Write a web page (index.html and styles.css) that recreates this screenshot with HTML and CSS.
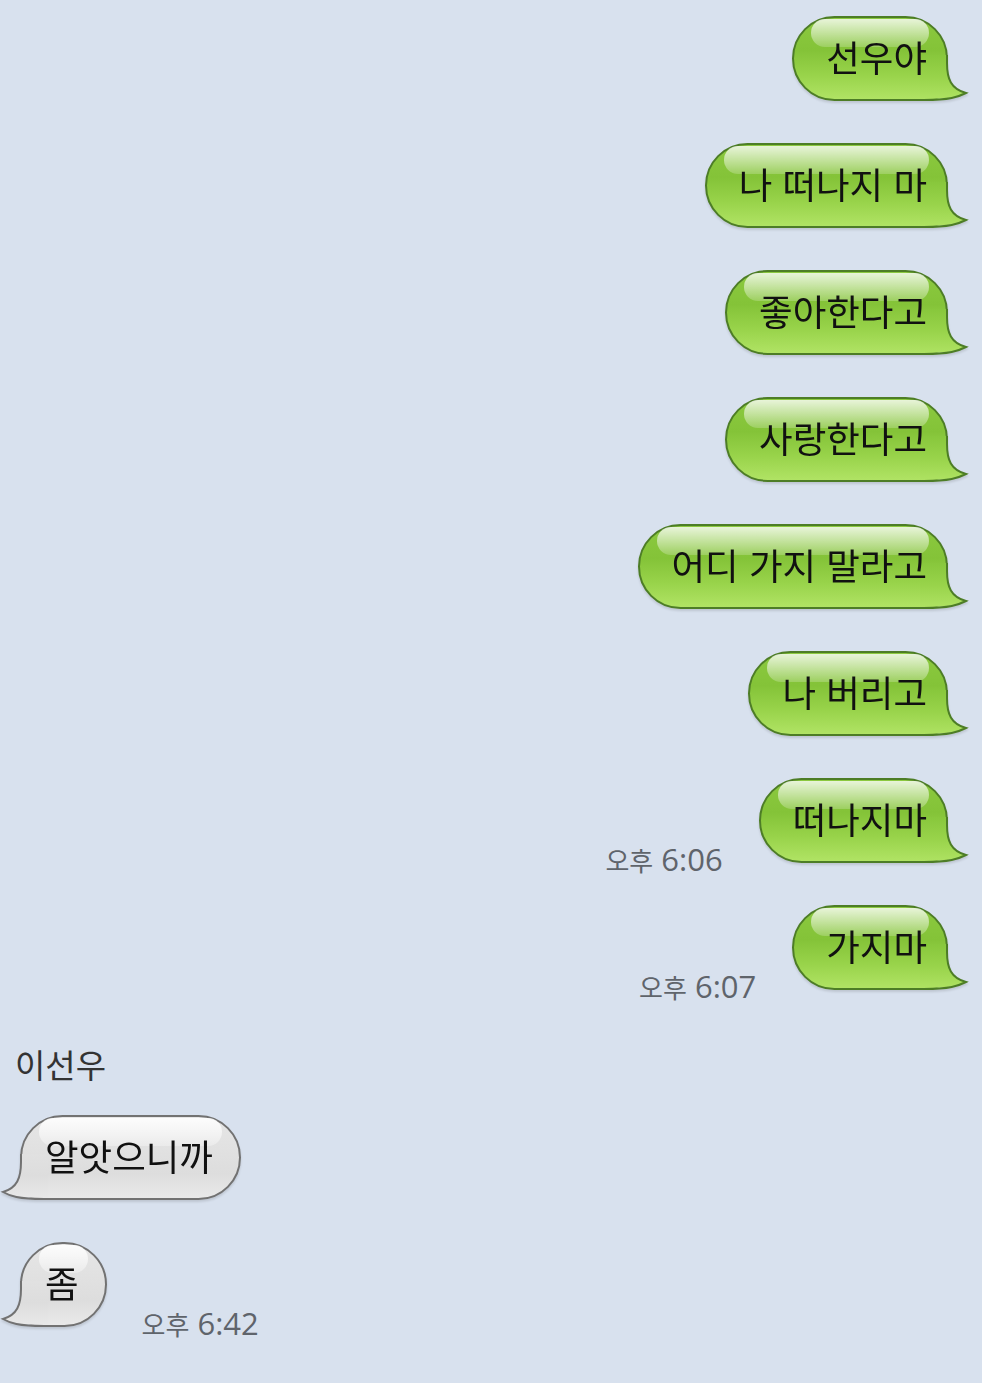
FILE: index.html
```html
<!DOCTYPE html>
<html lang="ko">
<head>
  <meta charset="UTF-8">
  <meta name="viewport" content="width=device-width, initial-scale=1.0">
  <title>이선우</title>
  <link rel="stylesheet" href="styles.css">
</head>
<body>
<svg class="sprite" width="0" height="0" aria-hidden="true">
  <defs>
    <linearGradient id="grad-green" x1="0" y1="0" x2="0" y2="46" gradientUnits="userSpaceOnUse">
      <stop offset="0" stop-color="#88c73c"/>
      <stop offset="0.47" stop-color="#98d34a"/>
      <stop offset="1" stop-color="#b0e364"/>
    </linearGradient>
    <linearGradient id="grad-gray" x1="0" y1="0" x2="0" y2="46" gradientUnits="userSpaceOnUse">
      <stop offset="0" stop-color="#e1e1e1"/>
      <stop offset="0.47" stop-color="#dddddd"/>
      <stop offset="1" stop-color="#e9e9e9"/>
    </linearGradient>
  </defs>
  <!-- bubble tail, drawn for a right-side bubble; left side is mirrored in css -->
  <symbol id="tail-green" viewBox="0 0 50 46">
    <path fill="url(#grad-green)" d="M0,0 L27,0 L27,8 C27,24 31,34 46,38 C38,42 30,44 4,44 L0,44 Z"/>
    <path fill="none" stroke="#4d7d26" stroke-width="2" d="M27,0 L27,8 C27,24 31,34 46,38 C38,42 30,45 4,45 L0,45"/>
  </symbol>
  <symbol id="tail-gray" viewBox="0 0 50 46">
    <path fill="url(#grad-gray)" d="M0,0 L27,0 L27,8 C27,24 31,34 45,38 C38,42 30,44 4,44 L0,44 Z"/>
    <path fill="none" stroke="#727272" stroke-width="2" d="M27,0 L27,8 C27,24 31,34 45,38 C38,42 30,45 4,45 L0,45"/>
  </symbol>
</svg>

<main class="chat">
  <div class="row out">
    <div class="bubble green"><svg class="tail"><use href="#tail-green"/></svg><span class="msg">선우야</span></div>
  </div>
  <div class="row out">
    <div class="bubble green"><svg class="tail"><use href="#tail-green"/></svg><span class="msg">나 떠나지 마</span></div>
  </div>
  <div class="row out">
    <div class="bubble green"><svg class="tail"><use href="#tail-green"/></svg><span class="msg">좋아한다고</span></div>
  </div>
  <div class="row out">
    <div class="bubble green"><svg class="tail"><use href="#tail-green"/></svg><span class="msg">사랑한다고</span></div>
  </div>
  <div class="row out">
    <div class="bubble green"><svg class="tail"><use href="#tail-green"/></svg><span class="msg">어디 가지 말라고</span></div>
  </div>
  <div class="row out">
    <div class="bubble green"><svg class="tail"><use href="#tail-green"/></svg><span class="msg">나 버리고</span></div>
  </div>
  <div class="row out">
    <time class="stamp"><span class="ampm">오후</span> 6:06</time>
    <div class="bubble green"><svg class="tail"><use href="#tail-green"/></svg><span class="msg">떠나지마</span></div>
  </div>
  <div class="row out">
    <time class="stamp"><span class="ampm">오후</span> 6:07</time>
    <div class="bubble green"><svg class="tail"><use href="#tail-green"/></svg><span class="msg">가지마</span></div>
  </div>

  <div class="sender">이선우</div>

  <div class="row in first">
    <div class="bubble gray"><svg class="tail"><use href="#tail-gray"/></svg><span class="msg">알앗으니까</span></div>
  </div>
  <div class="row in">
    <div class="bubble gray"><svg class="tail"><use href="#tail-gray"/></svg><span class="msg">좀</span></div>
    <time class="stamp"><span class="ampm">오후</span> 6:42</time>
  </div>
</main>
</body>
</html>
```

FILE: styles.css
```css
:root {
  --bg-color: #d8e1ee;
  --text-color: #111;
  --stamp-color: #5f646b;
}
* { box-sizing: border-box; }
body { margin: 0; background-color: var(--bg-color); color: var(--text-color); font-family: 'Noto Sans CJK KR', 'Noto Sans', sans-serif; }
.sprite { position: absolute; width: 0; height: 0; overflow: hidden; }
.chat { display: flex; flex-direction: column; gap: 42px; padding: 16px 0 40px; }

.row { display: flex; align-items: flex-end; gap: 36px; }
.row.out { justify-content: flex-end; padding-right: 34px; }
.row.in { justify-content: flex-start; padding-left: 20px; gap: 35px; }
.row.in.first { margin-top: -11px; }

.bubble { position: relative; display: flex; align-items: center; height: 85px; border: 2px solid; font-size: 36.5px; line-height: 1; white-space: nowrap; filter: drop-shadow(0 2px 1px rgba(0,0,0,0.12)); }
.bubble::before { content: ''; position: absolute; top: 1px; left: 17px; right: 17px; height: 28px; border-radius: 14px; }
.bubble .msg { position: relative; z-index: 1; top: -1px; }
.bubble .tail { position: absolute; bottom: -2px; width: 50px; height: 46px; overflow: visible; }

.bubble.green { padding: 0 19px 0 32px; border-color: #4d7d26; border-radius: 43px 43px 20px 43px; background: linear-gradient(to bottom, #8bc93f 0%, #84c338 40%, #98d34a 70%, #b0e364 100%); }
.bubble.green::before { background: linear-gradient(to bottom, rgba(255,255,255,0.8), rgba(255,255,255,0.2)); }
.bubble.green .tail { right: -24px; }

.bubble.gray { padding: 0 26px 0 23px; border-color: #727272; border-radius: 43px 43px 43px 20px; background: linear-gradient(to bottom, #e6e6e6 0%, #e1e1e1 40%, #dddddd 70%, #e9e9e9 100%); }
.bubble.gray::before { background: linear-gradient(to bottom, rgba(255,255,255,0.9), rgba(255,255,255,0.3)); }
.bubble.gray .tail { left: -24px; transform: scaleX(-1); }

.stamp { font-family: 'Open Sans', 'Noto Sans CJK KR', sans-serif; font-size: 31px; line-height: 30px; color: var(--stamp-color); margin-bottom: -12px; white-space: nowrap; }
.stamp .ampm { font-family: 'Noto Sans CJK KR', sans-serif; font-size: 26px; }
.sender { padding-left: 15px; margin-top: 12px; font-size: 33px; line-height: 40px; color: #333; }
```
